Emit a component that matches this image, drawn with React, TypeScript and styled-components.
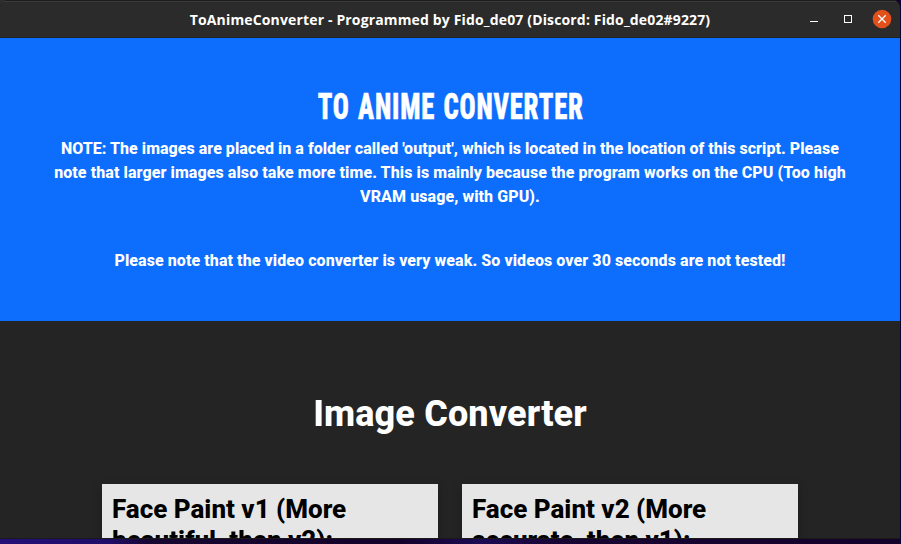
import React from 'react';
import styled, { createGlobalStyle } from 'styled-components';

const Global = createGlobalStyle`
  * { box-sizing: border-box; }
  html, body { margin: 0; background: #120a2c; overflow: hidden; }
`;
const Desktop = styled.div`
  width: 901px; height: 544px;
  background:
    linear-gradient(#2e2e2e, #2e2e2e) 0 0 / 12px 12px no-repeat,
    linear-gradient(90deg, #241078 0, #1f0d68 110px, #160630 150px, #14012a 400px, #1c0a55 480px, #180432 560px, #14012a 901px);
`;
const Window = styled.div`
  width: 900px; height: 539px; overflow: hidden; background: #242424;
  font-family: Roboto, sans-serif; border-radius: 8px 8px 0 0; border-bottom: 1px solid #1a1a1a;
`;
const TitleBar = styled.header`
  height: 38px; background: #2b2b2b; border-top: 1px solid #1c1c1c; border-bottom: 1px solid #222;
  box-shadow: inset 0 1px #3a3a3a;
  display: grid; grid-template-columns: 1fr auto 1fr; align-items: center;
`;
const Title = styled.div`
  grid-column: 2; font: 700 14px/20px "Open Sans", sans-serif; letter-spacing: 0.15px;
  color: #fff; white-space: nowrap; padding-top: 2px;
`;
const Controls = styled.svg`justify-self: end; display: block;`;
const Banner = styled.section`
  height: 283px; background: #0d6efd; padding: 48px 48px; text-align: center; color: #fff;
`;
const Heading = styled.h1`
  margin: 0 0 8px; height: 43px; display: flex; justify-content: center;
  font: 800 36px/43px Roboto, sans-serif; text-transform: uppercase; white-space: nowrap;
  font-stretch: 75%;
`;
const HeadingText = styled.span`
  flex: none; transform: scaleX(0.74); letter-spacing: 1.1px; word-spacing: 2px; margin-right: -1px;
  -webkit-text-stroke: 0.6px #fff;
`;
const Note = styled.p<{ $spacing: number }>`
  margin: 0 0 40px; font-size: 16px; line-height: 24px; font-weight: 800;
  letter-spacing: ${(p) => p.$spacing}px;
`;
const Lead = styled.span`letter-spacing: 0.03px;`;
const Section = styled.main`padding-top: 72px;`;
const SectionTitle = styled.h2`
  margin: 0 0 48px; text-align: center; font-size: 36px; line-height: 43px; font-weight: 800;
  letter-spacing: 0.15px; color: #fff;
`;
const Cards = styled.div`display: grid; grid-template-columns: 336px 336px; gap: 24px; justify-content: center;`;
const Card = styled.article`height: 200px; background: #e6e6e6; padding: 10px; box-shadow: 0 4px 10px rgba(0,0,0,.25);`;
const CardTitle = styled.h3`margin: 0; font-size: 26px; line-height: 31px; font-weight: 800; color: #000;`;

export default function App() {
  return (
    <Desktop>
      <Global />
      <Window>
        <TitleBar>
          <Title>ToAnimeConverter - Programmed by Fido_de07 (Discord: Fido_de02#9227)</Title>
          <Controls width="100" height="36" viewBox="0 1 100 36">
            <path d="M10 21.5h8" stroke="#fff" />
            <rect x="44.5" y="15.5" width="7" height="7" fill="none" stroke="#fff" />
            <circle cx="82" cy="19" r="9.3" fill="#e2501c" />
            <path d="M78.3 15.3l7.4 7.4M85.7 15.3l-7.4 7.4" stroke="#fff" strokeWidth="1.3" />
          </Controls>
        </TitleBar>
        <Banner>
          <Heading><HeadingText>To Anime Converter</HeadingText></Heading>
          <Note $spacing={0.08}><Lead>NOTE: The images are placed in a folder called 'output', which is located in the location of this script.</Lead> Please note that larger images also take more time. This is mainly because the program works on the CPU (Too high VRAM usage, with GPU).</Note>
          <Note $spacing={0.075}>Please note that the video converter is very weak. So videos over 30 seconds are not tested!</Note>
        </Banner>
        <Section>
          <SectionTitle>Image Converter</SectionTitle>
          <Cards>
            <Card><CardTitle>Face Paint v1 (More beautiful, then v2):</CardTitle></Card>
            <Card><CardTitle>Face Paint v2 (More accurate, then v1):</CardTitle></Card>
          </Cards>
        </Section>
      </Window>
    </Desktop>
  );
}
